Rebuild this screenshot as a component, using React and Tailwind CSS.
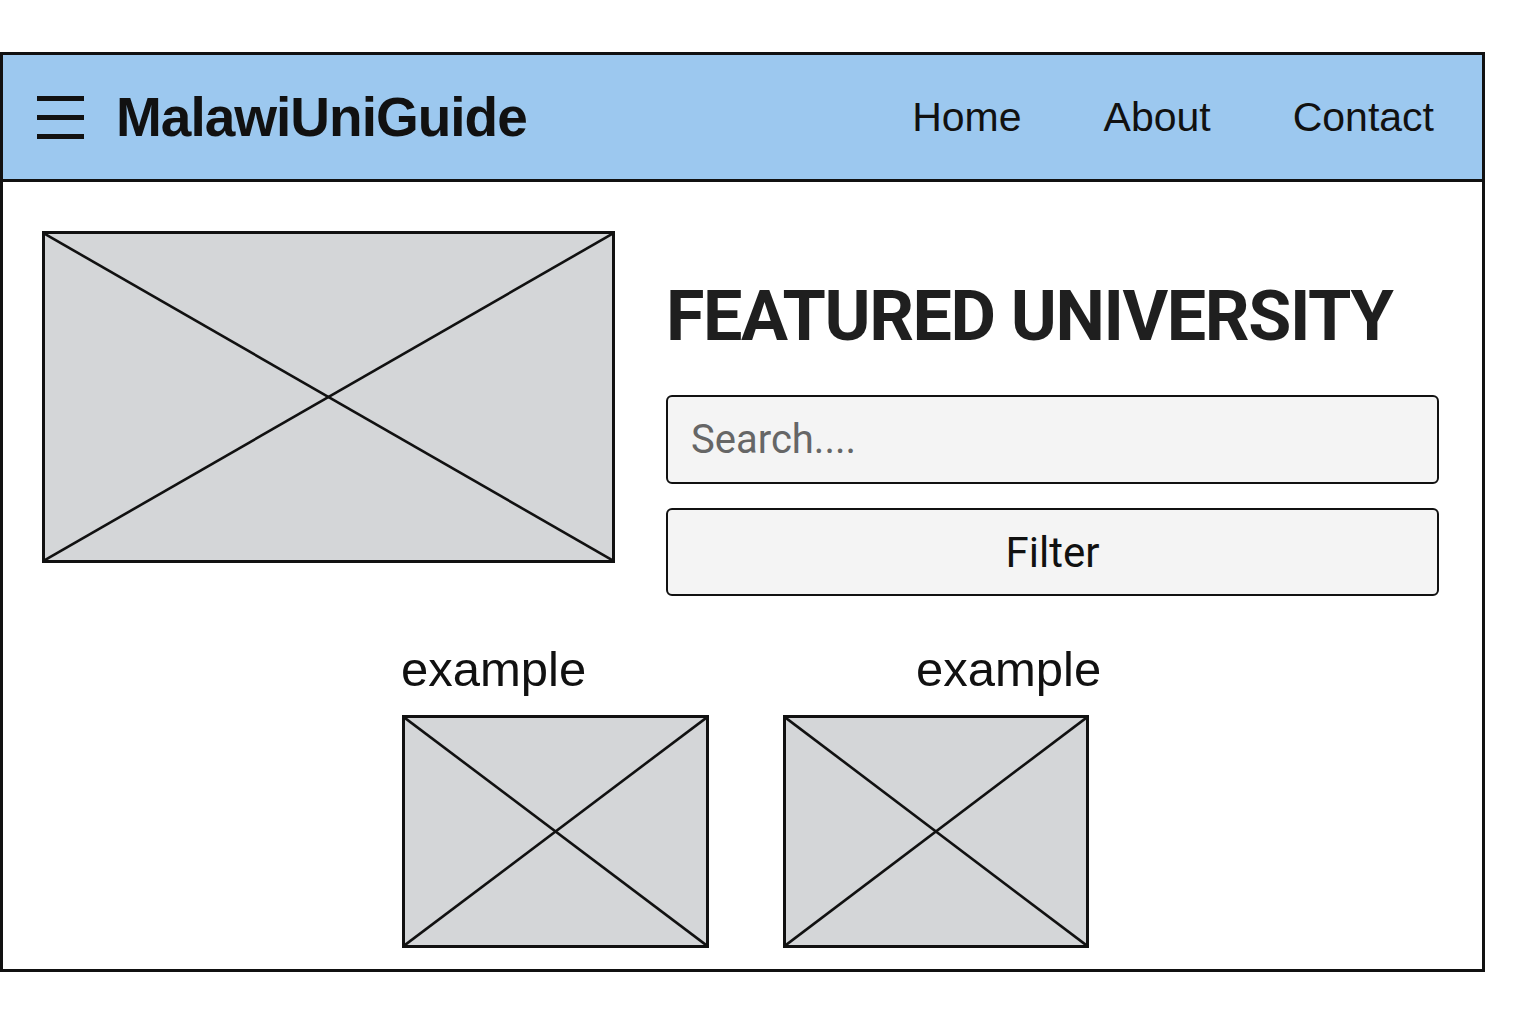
import React from "react";

function Placeholder({ className }) {
  return (
    <div className={"relative bg-[#d4d6d8] border-[3px] border-[#111] " + className}>
      <svg className="absolute inset-0 w-full h-full" viewBox="0 0 100 100" preserveAspectRatio="none">
        <line x1="0" y1="0" x2="100" y2="100" stroke="#111" strokeWidth="2.6" vectorEffect="non-scaling-stroke" />
        <line x1="100" y1="0" x2="0" y2="100" stroke="#111" strokeWidth="2.6" vectorEffect="non-scaling-stroke" />
      </svg>
    </div>
  );
}

export default function App() {
  return (
    <div className="w-[1536px] h-[1024px] bg-white pt-[52px] font-['Liberation_Sans',Arial,sans-serif] text-[#111]">
      <div className="w-[1485px] h-[920px] border-[3px] border-[#111] flex flex-col">
        <header className="h-[127px] shrink-0 bg-[#9cc8ef] border-b-[3px] border-[#111] flex items-center pl-[34px] pr-[48px]">
          <div className="flex flex-col gap-[14px] w-[47px]">
            <span className="block h-[5px] bg-[#111]" />
            <span className="block h-[5px] bg-[#111]" />
            <span className="block h-[5px] bg-[#111]" />
          </div>
          <div className="ml-[32px] text-[55px] font-bold tracking-[-1px] leading-none">MalawiUniGuide</div>
          <nav className="ml-auto flex items-center gap-[82px] text-[41px] leading-none">
            <span>Home</span>
            <span>About</span>
            <span>Contact</span>
          </nav>
        </header>
        <main className="flex flex-col pl-[39px] pt-[49px]">
          <div className="flex items-start">
            <Placeholder className="w-[573px] h-[332px] shrink-0" />
            <div className="ml-[51px] w-[773px] flex flex-col pt-[50px]">
              <h1 className="font-['Roboto',sans-serif] font-bold text-[70px] leading-[70px] tracking-[-1.4px] text-[#1f1f1f]">
                FEATURED UNIVERSITY
              </h1>
              <div className="mt-[44px] h-[89px] rounded-[6px] border-2 border-[#111] bg-[#f4f4f4] flex items-center pl-[23px] font-['Roboto',sans-serif] text-[40px] text-[#666]">
                Search....
              </div>
              <div className="mt-[24px] h-[88px] rounded-[6px] border-2 border-[#111] bg-[#f4f4f4] flex items-center justify-center font-['Roboto',sans-serif] text-[42px] text-[#111]">
                Filter
              </div>
            </div>
          </div>
          <div className="mt-[49px] pl-[360px] flex flex-col">
            <div className="flex text-[49px] leading-[48px] -ml-[1px]">
              <span className="w-[515px]">example</span>
              <span>example</span>
            </div>
            <div className="mt-[22px] flex gap-[74px]">
              <Placeholder className="w-[307px] h-[233px]" />
              <Placeholder className="w-[306px] h-[233px]" />
            </div>
          </div>
        </main>
      </div>
    </div>
  );
}
